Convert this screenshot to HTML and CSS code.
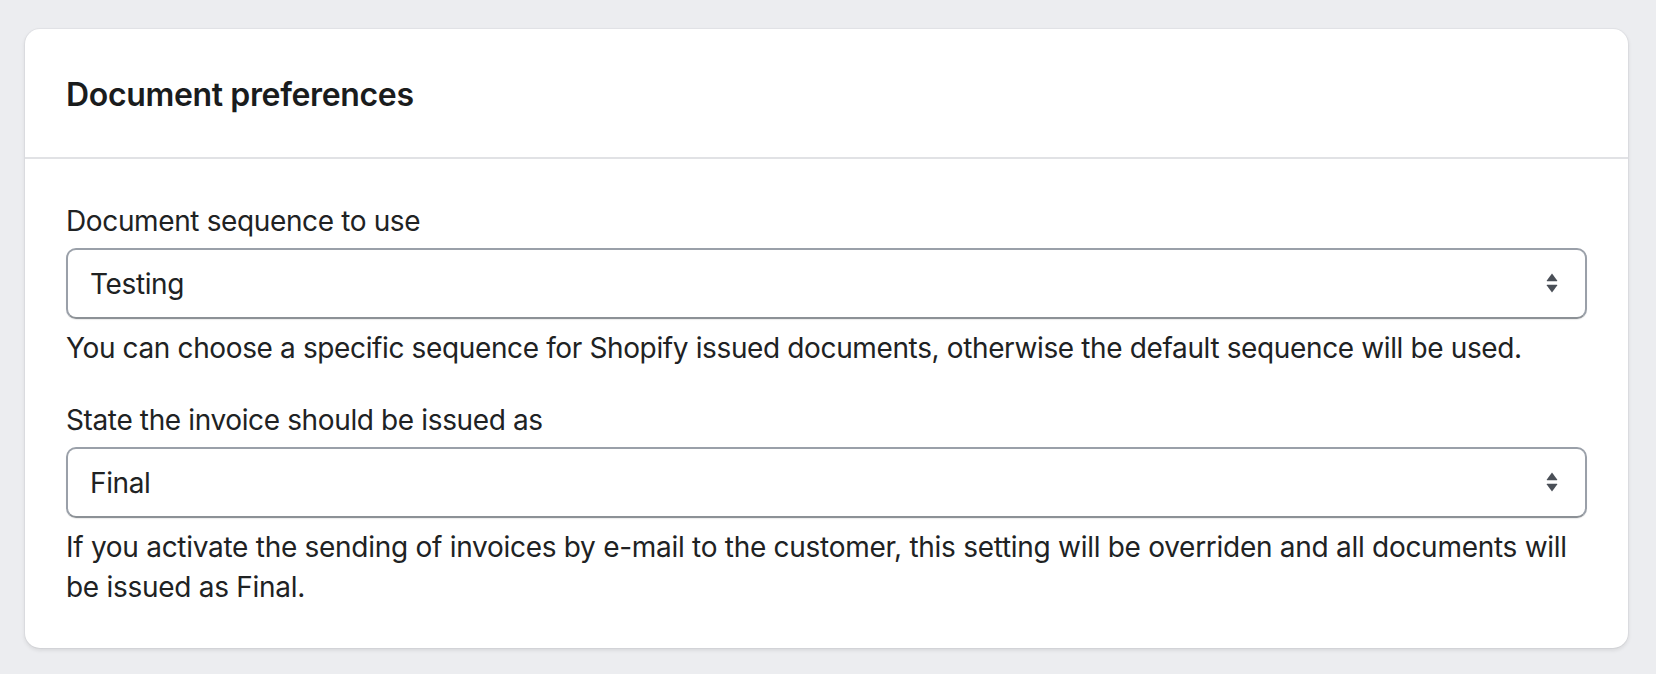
FILE: index.html
```html
<!DOCTYPE html>
<html lang="en">
<head>
<meta charset="utf-8">
<title>Document preferences</title>
<link rel="stylesheet" href="styles.css">
</head>
<body>
<div class="page">
  <section class="card">
    <header class="card-header">
      <h2 class="card-title">Document preferences</h2>
    </header>
    <div class="card-body">
      <div class="field">
        <label class="field-label" for="seq">Document sequence to use</label>
        <div class="select">
          <select id="seq" class="select-input">
            <option>Testing</option>
          </select>
          <svg class="select-icon" viewBox="0 0 12 20" aria-hidden="true">
            <path d="M6 0.5 L11.2 7.5 Q11.6 8.3 10.8 8.3 H1.2 Q0.4 8.3 0.8 7.5 Z" />
            <path d="M6 19.5 L11.2 12.5 Q11.6 11.7 10.8 11.7 H1.2 Q0.4 11.7 0.8 12.5 Z" />
          </svg>
        </div>
        <p class="help">You can choose a specific sequence for Shopify issued documents, otherwise the default sequence will be used.</p>
      </div>
      <div class="field">
        <label class="field-label" for="state">State the invoice should be issued as</label>
        <div class="select">
          <select id="state" class="select-input">
            <option>Final</option>
          </select>
          <svg class="select-icon" viewBox="0 0 12 20" aria-hidden="true">
            <path d="M6 0.5 L11.2 7.5 Q11.6 8.3 10.8 8.3 H1.2 Q0.4 8.3 0.8 7.5 Z" />
            <path d="M6 19.5 L11.2 12.5 Q11.6 11.7 10.8 11.7 H1.2 Q0.4 11.7 0.8 12.5 Z" />
          </svg>
        </div>
        <p class="help help-wide">If you activate the sending of invoices by e-mail to the customer, this setting will be overriden and all documents will be issued as Final.</p>
      </div>
    </div>
  </section>
</div>
</body>
</html>
```
FILE: styles.css
```css
* { box-sizing: border-box; }

html, body {
  margin: 0;
  padding: 0;
  background: #ecedf0;
}

body {
  font-family: Inter, "Noto Sans", "Liberation Sans", sans-serif;
  color: #202223;
  font-size: 28px;
  line-height: 40px;
  letter-spacing: -0.37px;
}

.page {
  padding: 29px 28px 28px 25px;
}

.card {
  background: #ffffff;
  border-radius: 15px;
  box-shadow: 0 2px 4px rgba(31, 33, 36, 0.12), 0 0 0 1px rgba(63, 63, 68, 0.04);
  overflow: hidden;
}

.card-header {
  padding: 42px 41px 38px;
  border-bottom: 2px solid #e1e2e5;
}

.card-title {
  margin: 0;
  font-size: 32px;
  line-height: 48px;
  font-weight: 600;
  letter-spacing: -0.35px;
  color: #1a1c1d;
}

.card-body {
  padding: 42px 41px 41px;
  display: flex;
  flex-direction: column;
  gap: 32px;
}

.field {
  display: flex;
  flex-direction: column;
}

.field-label {
  display: block;
  margin-bottom: 7px;
}

.select {
  position: relative;
}

.select-input {
  appearance: none;
  -webkit-appearance: none;
  display: block;
  width: 100%;
  height: 71px;
  margin: 0;
  padding: 0 60px 0 22px;
  font: inherit;
  letter-spacing: inherit;
  color: #202223;
  background: #ffffff;
  border: 2px solid #9aa0a9;
  border-bottom-color: #8c9196;
  border-radius: 10px;
  box-shadow: 0 1px 1px rgba(0, 0, 0, 0.08);
  outline: none;
}

.select-icon {
  position: absolute;
  right: 29px;
  top: 25px;
  width: 12px;
  height: 20px;
  fill: #4a4f57;
  pointer-events: none;
}

.help {
  margin: 9px 0 0;
  color: #202223;
}

.help-wide {
  letter-spacing: -0.28px;
}
```
